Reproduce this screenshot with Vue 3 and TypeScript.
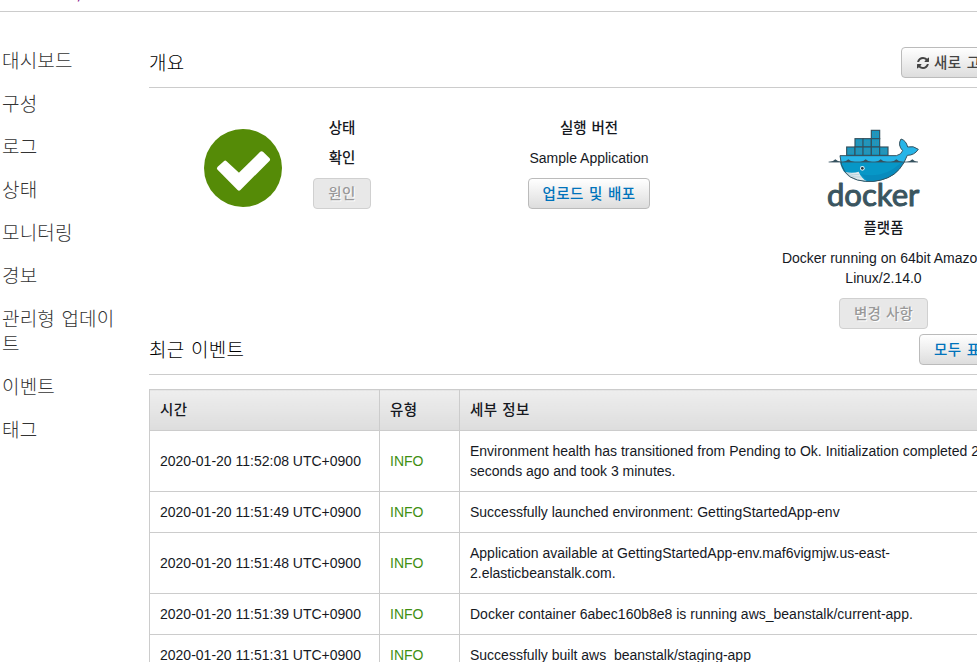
<script setup lang="ts">
interface EventRow {
  time: string
  type: string
  lines: string[]
}

const navItems: string[] = ['대시보드', '구성', '로그', '상태', '모니터링', '경보', '관리형 업데이트', '이벤트', '태그']

const events: EventRow[] = [
  { time: '2020-01-20 11:52:08 UTC+0900', type: 'INFO', lines: ['Environment health has transitioned from Pending to Ok. Initialization completed 27', 'seconds ago and took 3 minutes.'] },
  { time: '2020-01-20 11:51:49 UTC+0900', type: 'INFO', lines: ['Successfully launched environment: GettingStartedApp-env'] },
  { time: '2020-01-20 11:51:48 UTC+0900', type: 'INFO', lines: ['Application available at GettingStartedApp-env.maf6vigmjw.us-east-', '2.elasticbeanstalk.com.'] },
  { time: '2020-01-20 11:51:39 UTC+0900', type: 'INFO', lines: ['Docker container 6abec160b8e8 is running aws_beanstalk/current-app.'] },
  { time: '2020-01-20 11:51:31 UTC+0900', type: 'INFO', lines: ['Successfully built aws_beanstalk/staging-app'] },
]

const containers: number[][] = [
  [304, 46],
  [255, 71], [279, 71], [304, 71],
  [230, 96], [255, 96], [279, 96], [304, 96], [329, 96],
]
</script>

<template>
  <div class="page">
    <header class="crumbs"><span class="crumb">,</span></header>
    <div class="body">
      <nav class="nav">
        <a v-for="item in navItems" :key="item" class="nav-item">{{ item }}</a>
      </nav>
      <main class="main">
        <div class="section-head overview-head">
          <h2>개요</h2>
          <button class="btn refresh">
            <svg class="refresh-icon" viewBox="0 0 1536 1536">
              <path d="M1511 928q0 5-1 7-64 268-268 434.500T764 1536q-146 0-282.500-55T238 1324l-129 129q-19 19-45 19t-45-19-19-45V960q0-26 19-45t45-19h448q26 0 45 19t19 45-19 45l-137 137q71 66 161 102t187 36q134 0 250-65t186-179q11-17 53-117 8-23 30-23h192q13 0 22.500 9.500t9.500 22.500zm25-800v448q0 26-19 45t-45 19h-448q-26 0-45-19t-19-45 19-45l138-138Q969 256 768 256q-134 0-250 65T332 500q-11 17-53 117-8 23-30 23H50q-13 0-22.500-9.500T18 608v-7q65-268 270-434.500T768 0q146 0 284 55.500T1297 212l130-129q19-19 45-19t45 19 19 45z" />
            </svg>
            <span>새로 고침</span>
          </button>
        </div>
        <section class="overview">
          <div class="health">
            <svg class="health-icon" viewBox="0 0 78 78">
              <circle cx="39" cy="39" r="39" fill="#558b07" />
              <path d="M15 39.300 21.200 33.700 35 46.500 57.600 24.300 64 30.500 35 59.600Z" fill="#fff" stroke="#fff" stroke-width="4" stroke-linejoin="round" />
            </svg>
            <div class="stack health-text">
              <strong>상태</strong>
              <strong>확인</strong>
              <button class="btn disabled cause" disabled>원인</button>
            </div>
          </div>
          <div class="stack version">
            <strong>실행 버전</strong>
            <span>Sample Application</span>
            <button class="btn link">업로드 및 배포</button>
          </div>
          <div class="stack platform">
            <svg class="docker" viewBox="174 42 273 237">
              <path d="M210 122H379Q394 119 398 107 382 90 393 72 408 76 413 96 430 91 445 103 433 121 412 121 393 171 354 188 310 207 262 195 213 182 210 122Z" fill="#27b5e8" />
              <path d="M210 141H401Q386 175 354 188 310 207 262 195 218 184 210 141Z" fill="#0797c7" />
              <path d="M394 141Q347 191 273 178L292 197Q334 197 360 185 384 171 401 141Z" fill="#078bbd" />
              <path d="M220 170Q248 176 266 170 274 190 290 198 240 198 220 170Z" fill="#dce8ed" />
              <path d="M229 173Q250 183 268 178M233 179Q255 189 275 186" fill="none" stroke="#a9c9d5" stroke-width="2" />
              <path d="M210 122H379Q394 119 398 107 382 90 393 72 408 76 413 96 430 91 445 103 433 121 412 121 393 171 354 188 310 207 262 195 213 182 210 122Z" fill="none" stroke="#35515e" stroke-width="3" />
              <g v-for="([x, y], i) in containers" :key="i">
                <rect :x="x" :y="y" width="25" height="25" fill="#1599c4" stroke="#35515e" stroke-width="3.500" />
                <path :d="`M${x + 7} ${y + 6}v13M${x + 12.500} ${y + 6}v13M${x + 18} ${y + 6}v13`" stroke="#3c8fa8" stroke-width="2.500" />
              </g>
              <path d="M176 141H444" stroke="#35515e" stroke-width="2.500" />
              <path d="M179 141Q190 139 196 133 204 141 215 141ZM218 141Q229 139 235 133 243 141 254 141ZM270 141Q281 139 287 133 295 141 306 141ZM315 141Q326 139 332 133 340 141 351 141ZM362 141Q373 139 379 133 387 141 398 141ZM410 141Q421 139 427 133 435 141 443 141Z" fill="#35515e" />
              <circle cx="277" cy="160" r="7" fill="#d9eef5" />
              <circle cx="277" cy="160" r="4" fill="#26343b" />
              <text class="docker-word" x="171" y="274" textLength="277" lengthAdjust="spacingAndGlyphs">docker</text>
            </svg>
            <strong class="platform-title">플랫폼</strong>
            <span class="platform-name">Docker running on 64bit Amazon<br />Linux/2.14.0</span>
            <button class="btn disabled changes" disabled>변경 사항</button>
          </div>
        </section>
        <div class="section-head events-head">
          <h2>최근 이벤트</h2>
          <button class="btn link show-all">모두 표시</button>
        </div>
        <table class="events">
          <thead>
            <tr>
              <th class="col-time"><span>시간</span></th>
              <th class="col-type"><span>유형</span></th>
              <th><span>세부 정보</span></th>
            </tr>
          </thead>
          <tbody>
            <tr v-for="row in events" :key="row.time">
              <td>{{ row.time }}</td>
              <td class="info">{{ row.type }}</td>
              <td><div v-for="line in row.lines" :key="line">{{ line }}</div></td>
            </tr>
          </tbody>
        </table>
      </main>
    </div>
  </div>
</template>

<style>
body {
  margin: 0;
  background: #fff;
}
</style>

<style scoped>
.page {
  width: 100%;
  height: 662px;
  overflow: hidden;
  font-family: "Liberation Sans", "Noto Sans CJK KR", sans-serif;
  font-size: 14px;
  line-height: 20px;
  color: #16191f;
}
.crumbs {
  box-sizing: border-box;
  height: 12px;
  padding-left: 76px;
  overflow: hidden;
  border-bottom: 1px solid #ccc;
}
.crumb {
  display: block;
  margin-top: -17px;
  font-size: 18px;
  color: #800080;
}
.body {
  display: flex;
  width: 1005px;
}
.nav {
  flex: none;
  display: flex;
  flex-direction: column;
  gap: 18px;
  box-sizing: border-box;
  width: 149px;
  padding: 35px 31px 0 2px;
}
.nav-item {
  font-family: "Noto Sans CJK KR", sans-serif;
  font-size: 19px;
  font-weight: 300;
  line-height: 25px;
  letter-spacing: 0.200px;
  word-spacing: 2px;
  color: #333;
  word-break: break-all;
}
.main {
  flex: none;
  width: 856px;
}
.section-head {
  display: flex;
  justify-content: space-between;
  align-items: flex-start;
  box-sizing: border-box;
  border-bottom: 1px solid #ccc;
}
.overview-head {
  height: 76px;
  padding-top: 35px;
}
.events-head {
  height: 41px;
}
h2 {
  margin: 2px 0 0;
  font-family: "Noto Sans CJK KR", sans-serif;
  font-size: 19px;
  font-weight: 300;
  line-height: 26px;
  letter-spacing: 0.300px;
  word-spacing: 2px;
  color: #000;
}
.btn {
  box-sizing: border-box;
  height: 31px;
  padding: 0 14px;
  border: 1px solid #bbb;
  border-radius: 4px;
  background: linear-gradient(#fff, #ddd);
  font: 500 14.500px/26px "Noto Sans CJK KR", sans-serif;
  letter-spacing: 0.400px;
  word-spacing: 1.500px;
  color: #444;
  white-space: nowrap;
}
.btn:not(.refresh) {
  padding-bottom: 1px;
}
.btn.link {
  color: #0073bb;
}
.btn.disabled {
  border-color: #d0d0d0;
  background: #e8e8e8;
  color: #999;
  text-shadow: 1px 1px 0 #fff;
}
.btn.cause {
  width: 58px;
}
.btn.changes {
  width: 89px;
  padding-inline: 0;
  letter-spacing: 0.200px;
}
.refresh {
  display: flex;
  align-items: center;
  gap: 5px;
  width: 104px;
  padding-left: 15px;
}
.refresh span {
  margin-top: -1px;
}
.refresh-icon {
  flex: none;
  width: 12px;
  height: 12px;
  fill: #444;
}
.show-all {
  width: 86px;
}
.overview {
  display: grid;
  grid-template-columns: 318px 244px 294px;
  box-sizing: border-box;
  height: 246px;
  padding-top: 30px;
}
.health {
  display: flex;
  padding-left: 55px;
}
.health-icon {
  width: 78px;
  height: 78px;
  margin: 11px 31px 0 0;
}
.stack {
  display: flex;
  flex-direction: column;
  align-items: center;
  gap: 10px;
}
strong {
  margin-top: -1px;
  margin-bottom: 1px;
  font-family: "Noto Sans CJK KR", sans-serif;
  font-size: 14.500px;
  font-weight: 500;
  word-spacing: 1.500px;
}
.docker {
  width: 91px;
  height: 79px;
  margin: 11px 0 0 -20px;
  overflow: visible;
}
.docker-word {
  font-family: Lato, sans-serif;
  font-size: 90px;
  font-weight: 400;
  fill: #3a5560;
  stroke: #3a5560;
  stroke-width: 3px;
  stroke-linejoin: round;
}
.platform {
  width: 345px;
}
.platform-title {
  margin-top: -1px;
}
.platform-name {
  text-align: center;
  white-space: nowrap;
}
.events {
  width: 856px;
  margin-top: 14px;
  border-collapse: collapse;
  table-layout: fixed;
}
.events th,
.events td {
  box-sizing: border-box;
  padding: 10px;
  border: 1px solid #ccc;
  text-align: left;
  vertical-align: middle;
  white-space: nowrap;
}
.events th {
  height: 41px;
  padding: 9px 10px 11px;
  background: linear-gradient(#eee, #ddd);
  font-family: "Noto Sans CJK KR", sans-serif;
  font-size: 14.500px;
  font-weight: 500;
  letter-spacing: 0.300px;
  word-spacing: 1.500px;
}
.events .col-time {
  width: 230px;
}
.events .col-type {
  width: 80px;
}
.events .info {
  color: #3f8f12;
}
</style>
